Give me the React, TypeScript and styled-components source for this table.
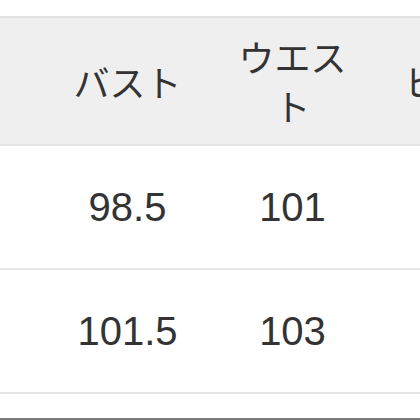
import React from 'react';
import styled, { createGlobalStyle } from 'styled-components';

const GlobalStyle = createGlobalStyle`
  html, body {
    margin: 0;
    padding: 0;
    background: #ffffff;
    overflow: hidden;
  }
  body {
    font-family: "Liberation Sans", "Noto Sans CJK JP", sans-serif;
    color: #333333;
  }
`;

const Page = styled.div`
  width: 420px;
  height: 420px;
  display: flex;
  flex-direction: column;
  padding-top: 16px;
  box-sizing: border-box;
  overflow: hidden;
`;

const Table = styled.div`
  display: flex;
  flex-direction: column;
  width: 540px;
`;

const Row = styled.div<{ $head?: boolean; $height: number }>`
  display: grid;
  grid-template-columns: 45px 165px 165px 165px;
  height: ${p => p.$height}px;
  box-sizing: border-box;
  background: ${p => (p.$head ? '#efefef' : '#ffffff')};
  border-top: ${p => (p.$head ? '2px solid #e3e3e3' : 'none')};
  border-bottom: 2px solid #e6e6e6;
`;

const Cell = styled.div`
  display: flex;
  align-items: center;
  justify-content: center;
  text-align: center;
  padding: 0 16px;
  box-sizing: border-box;
  font-size: 40px;
  line-height: 48px;
  overflow: hidden;
`;

const HeadCell = styled(Cell)`
  font-family: "Noto Sans CJK JP", sans-serif;
  font-size: 36px;
  line-height: 49px;
  font-weight: 400;
  word-break: break-all;
  padding: 0 20px;
`;

const Spacer = styled.div`
  flex: 1;
`;

const BottomRule = styled.div`
  height: 2px;
  background: #7a7a7a;
`;

const headers = ['', 'バスト', 'ウエスト', 'ヒップ'];
const rows = [
  ['', '98.5', '101', ''],
  ['', '101.5', '103', ''],
];

export default function App() {
  return (
    <Page>
      <GlobalStyle />
      <Table>
        <Row $head $height={130}>
          {headers.map((h, i) => (
            <HeadCell key={i}>{h}</HeadCell>
          ))}
        </Row>
        {rows.map((r, i) => (
          <Row key={i} $height={124}>
            {r.map((c, j) => (
              <Cell key={j}>{c}</Cell>
            ))}
          </Row>
        ))}
      </Table>
      <Spacer />
      <BottomRule />
    </Page>
  );
}
